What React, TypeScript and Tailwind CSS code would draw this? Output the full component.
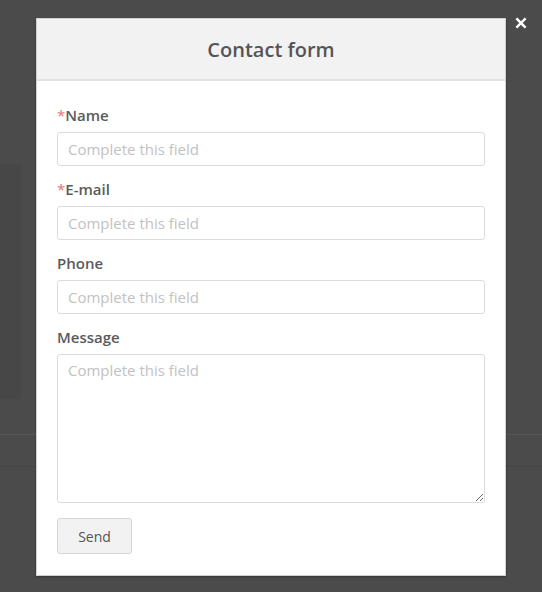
import { useState } from 'react';

const Label = ({ text, required }: { text: string; required?: boolean }) => (
  <label className="block h-5 leading-5 text-[15px] font-semibold text-[#5a5a5a] mb-[7px]">
    {required && <span className="text-[#e87272] font-normal">*</span>}
    {text}
  </label>
);

const Field = ({ label, required }: { label: string; required?: boolean }) => (
  <div>
    <Label text={label} required={required} />
    <input
      type="text"
      placeholder="Complete this field"
      className="block w-full h-[34px] px-[10px] rounded-[3px] border border-[#dcdcdc] bg-white text-[15px] text-[#555] placeholder:text-[#c2c2c2] outline-none"
    />
  </div>
);

export default function App() {
  const [msg, setMsg] = useState('');

  return (
    <div className="relative min-h-[592px] w-full overflow-hidden bg-[#4b4b4b] font-['Open_Sans',sans-serif]">
      {/* page behind the overlay */}
      <div className="absolute left-0 top-[164px] w-[21px] h-[235px] bg-[#474747]" />
      <div className="absolute left-0 top-[434px] w-full h-px bg-[#555555]" />
      <div className="absolute left-0 top-[466px] w-full h-px bg-[#444444]" />

      <button className="absolute left-[515px] top-[17px] w-3 h-3 text-white" aria-label="Close">
        <svg viewBox="0 0 12 12" className="w-3 h-3">
          <path d="M2.2 2.2 L9.8 9.8 M9.8 2.2 L2.2 9.8" stroke="currentColor" strokeWidth="2.4" strokeLinecap="square" />
        </svg>
      </button>

      <div className="relative ml-[36px] mt-[18px] w-[470px] bg-white border border-[#d0d0d0] shadow-[0_1px_2px_rgba(0,0,0,0.3)]">
        <div className="h-[62px] pt-[2px] bg-[#f2f2f2] border-b-2 border-[#e2e2e2] flex items-center justify-center">
          <h1 className="text-[20px] font-semibold text-[#555] leading-none">Contact form</h1>
        </div>

        <form className="px-[20px] pt-[24px] pb-[21px] flex flex-col gap-[13px]" onSubmit={(e) => e.preventDefault()}>
          <Field label="Name" required />
          <Field label="E-mail" required />
          <Field label="Phone" />
          <div>
            <Label text="Message" />
            <textarea
              value={msg}
              onChange={(e) => setMsg(e.target.value)}
              placeholder="Complete this field"
              className="block w-full h-[149px] px-[10px] py-[4px] rounded-[3px] border border-[#dcdcdc] bg-white text-[15px] text-[#555] placeholder:text-[#c2c2c2] outline-none resize-y"
            />
          </div>
          <div className="pt-[2px]">
            <button
              type="submit"
              className="w-[75px] h-[36px] rounded-[3px] border border-[#d6d6d6] bg-[#f2f2f2] text-[14px] text-[#555]"
            >
              Send
            </button>
          </div>
        </form>
      </div>
    </div>
  );
}
